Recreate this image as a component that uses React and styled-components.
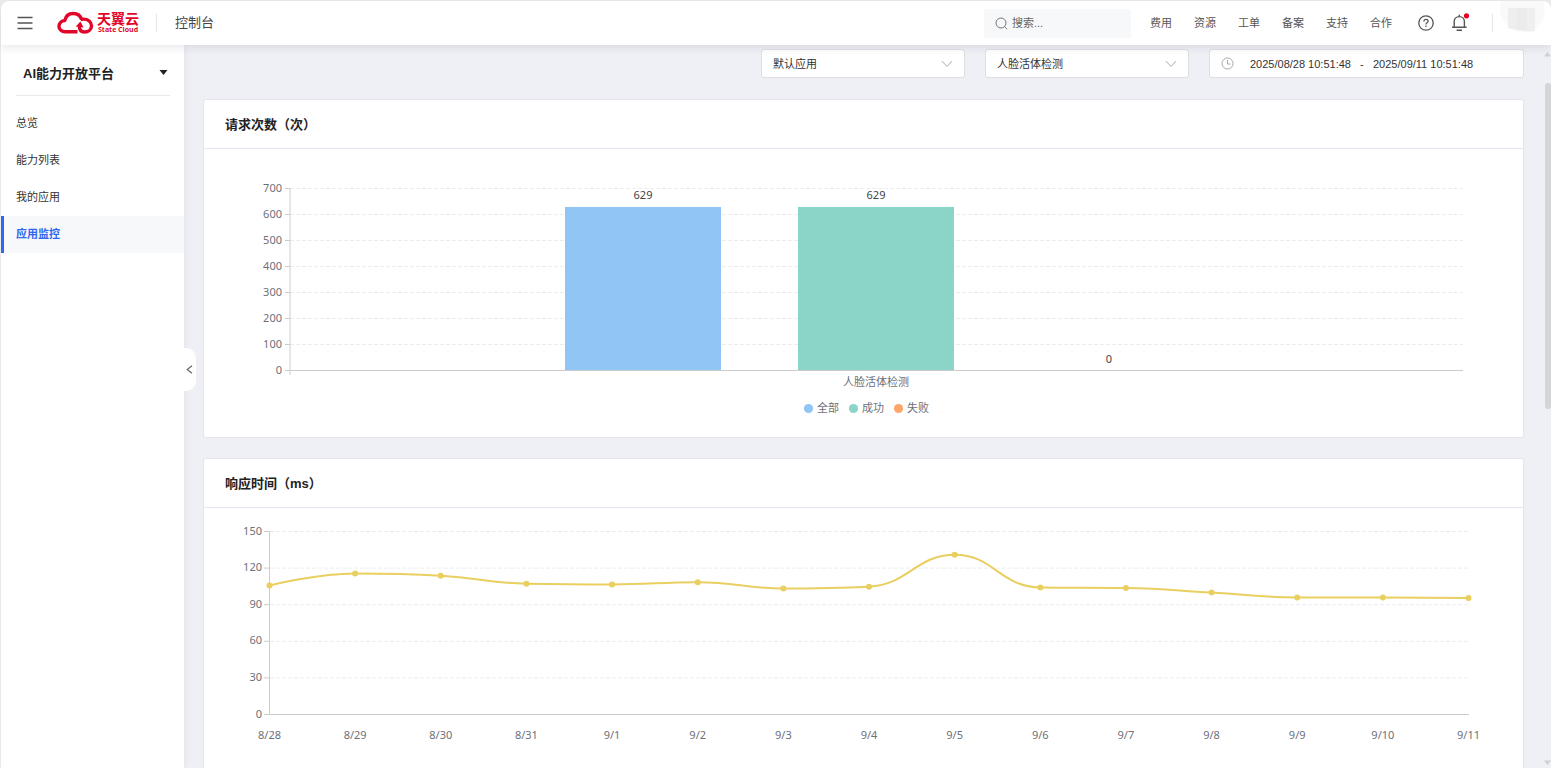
import React from "react";
import styled, { createGlobalStyle } from "styled-components";

const GlobalStyle = createGlobalStyle`
  * { box-sizing: border-box; }
  body {
    margin: 0;
    background: #eeeeef;
    color: #333;
    font-family: "Liberation Sans", "Noto Sans CJK SC", sans-serif;
    font-size: 11px;
  }
  button, input, select { font: inherit; color: inherit; }
`;

const Shell = styled.div`
  display: flex;
  flex-direction: column;
  height: 100vh;
  padding: 1px 0 0 1px;
  overflow: hidden;
`;

const Header = styled.header`
  position: relative;
  z-index: 2;
  display: flex;
  flex: none;
  align-items: center;
  height: 44px;
  padding: 0 6px 0 16px;
  background: #fff;
  border-radius: 8px 8px 0 0;
  box-shadow: 0 2px 10px rgba(40, 45, 80, 0.12);
`;

const IconButton = styled.button`
  display: flex;
  padding: 0;
  border: 0;
  background: none;
  cursor: pointer;
`;

const Brand = styled.a`
  display: flex;
  align-items: center;
  gap: 3px;
  margin-right: 17px;
  margin-left: 24px;
  color: #e1052a;
  text-decoration: none;
`;

const BrandText = styled.span`
  display: flex;
  flex-direction: column;
  width: 42px;
`;

const BrandName = styled.span`
  font-size: 14px;
  line-height: 14px;
  font-weight: 700;
`;

const BrandSub = styled.span`
  padding-left: 1px;
  font-family: "Open Sans", "Liberation Sans", sans-serif;
  font-size: 7px;
  line-height: 8px;
  font-weight: 700;
  white-space: nowrap;
`;

const Separator = styled.span`
  width: 1px;
  height: 18px;
  background: #e6e6e6;
`;

const ConsoleLink = styled.a`
  margin-left: 18px;
  color: #444;
  font-size: 13px;
  line-height: 20px;
  text-decoration: none;
`;

const Search = styled.label`
  display: flex;
  align-items: center;
  gap: 4px;
  width: 147px;
  height: 29px;
  margin-left: auto;
  padding: 0 11px;
  background: #f7f8fa;
  border-radius: 3px;
`;

const SearchInput = styled.input`
  flex: 1;
  min-width: 0;
  padding: 0;
  border: 0;
  outline: 0;
  background: none;
  &::placeholder { color: #666; opacity: 1; }
`;

const TopNav = styled.nav`
  display: flex;
  gap: 22px;
  margin: 0 26px 0 19px;
`;

const TopLink = styled.a`
  color: #555;
  line-height: 18px;
  text-decoration: none;
`;

const Actions = styled.div`
  display: flex;
  align-items: center;
  gap: 17px;
  margin-right: 21px;
`;

const Body = styled.div`
  display: flex;
  flex: 1;
  min-height: 0;
`;

const Sidebar = styled.aside`
  position: relative;
  z-index: 1;
  flex: none;
  width: 183px;
  background: #fff;
  box-shadow: 1px 0 6px rgba(40, 45, 80, 0.06);
`;

const Product = styled.button`
  display: flex;
  align-items: center;
  justify-content: space-between;
  width: 154px;
  height: 51px;
  margin: 0 0 9px 15px;
  padding: 4px 2px 0 7px;
  border: 0;
  border-bottom: 1px solid #e8e9ef;
  background: none;
  color: #222;
  font-size: 13px;
  font-weight: 700;
  cursor: pointer;
`;

const MenuLink = styled.a`
  display: flex;
  align-items: center;
  height: 37px;
  padding: 0 0 3px 12px;
  border-left: 3px solid ${(p) => (p.$active ? "#2f66f2" : "transparent")};
  background: ${(p) => (p.$active ? "#f7f8fa" : "transparent")};
  color: ${(p) => (p.$active ? "#2f66f2" : "#333")};
  font-weight: ${(p) => (p.$active ? 700 : 400)};
  text-decoration: none;
`;

const Collapse = styled.button`
  position: absolute;
  top: 303px;
  left: 100%;
  display: flex;
  align-items: center;
  width: 12px;
  height: 43px;
  padding: 0 0 0 2px;
  border: 0;
  border-radius: 0 10px 10px 0;
  background: #fff;
  cursor: pointer;
`;

const Main = styled.main`
  flex: 1;
  min-width: 0;
  padding: 4px 20px 0 19px;
  overflow: hidden;
  background: #eff0f5;
`;

const Filters = styled.div`
  display: flex;
  justify-content: flex-end;
  gap: 20px;
  margin-bottom: 21px;
`;

const Field = styled.div`
  display: flex;
  align-items: center;
  width: ${(p) => p.$width}px;
  height: 29px;
  padding: 0 11px;
  border: 1px solid #dddfe3;
  border-radius: 3px;
  background: #fff;
`;

const Select = styled.select`
  flex: 1;
  height: 27px;
  padding: 0;
  border: 0;
  outline: 0;
  appearance: none;
  background: none;
`;

const DateInput = styled.input`
  width: 104px;
  padding: 0;
  border: 0;
  outline: 0;
  background: none;
`;

const DateDash = styled.span`
  width: 19px;
  padding-left: 6px;
`;

const ClockWrap = styled.span`
  display: flex;
  width: 29px;
`;

const Card = styled.section`
  margin-bottom: 20px;
  border: 1px solid #e4e5ee;
  border-radius: 3px;
  background: #fff;
`;

const CardTitle = styled.h2`
  display: flex;
  align-items: center;
  height: 49px;
  margin: 0;
  padding: 0 0 2px 21px;
  border-bottom: 1px solid #e4e5ee;
  color: #222;
  font-size: 13px;
  font-weight: 700;
`;

const Chart = styled.svg`
  display: block;
  width: 100%;
  height: auto;
  font-family: "Noto Sans", "Noto Sans CJK SC", sans-serif;
  font-size: 11px;
  fill: #6e7079;
`;

const ScrollTrack = styled.div`
  display: flex;
  flex: none;
  flex-direction: column;
  align-items: center;
  justify-content: space-between;
  width: 7px;
  padding: 7px 0 3px;
  background: #eff0f5;
`;

const ScrollThumb = styled.div`
  width: 6px;
  height: 326px;
  margin: 26px 0 auto;
  border-radius: 3px;
  background: #d5d5d8;
`;

const Chevron = () => (
  <svg width="12" height="8" viewBox="0 0 12 8" fill="none" stroke="#a5a8ad" aria-hidden="true">
    <path d="M1 1.2 6 6.4 11 1.2" />
  </svg>
);

const CloudLogo = () => (
  <svg width="37" height="24" viewBox="0 0 37 24" fill="none" stroke="#e1052a" strokeWidth="3.4" strokeLinejoin="round" aria-hidden="true">
    <path d="M20.500 20.800H8.300C4.700 20.800 2 18.600 2 15.400s2.400-5.700 5.800-5.900C8.700 5.200 12 2.500 16.200 2.500c4.200 0 7.300 2.300 8.400 6.100" />
    <path d="M23.500 8.700c.9-.4 1.900-.6 3-.6 4.600 0 8 2.800 8 6.600 0 3.700-3.100 6.300-7 6.300-3.300 0-5.200-2.200-5.200-6.200" />
    <path d="M18.800 15.400 23.400 10.400 26.600 16.600Z" fill="#e1052a" stroke="none" />
  </svg>
);

const Y1_TOP = 39.5;
const Y1_BASE = 221.5;
const BARS = [
  { name: "全部", value: 629, color: "#91c5f6", x: 361 },
  { name: "成功", value: 629, color: "#8bd4c8", x: 594 },
  { name: "失败", value: 0, color: "#fca66a", x: 827 },
];

const RequestChart = () => {
  const y = (v) => Y1_BASE - (v / 700) * (Y1_BASE - Y1_TOP);
  return (
    <Chart viewBox="0 0 1319 288" role="img" aria-label="请求次数">
      {[0, 100, 200, 300, 400, 500, 600, 700].map((v) => (
        <g key={v}>
          {v > 0 && <path d={`M86 ${y(v)}H1259`} stroke="#ededf0" strokeDasharray="4 2" />}
          <path d={`M81 ${y(v)}h5`} stroke="#ccc" />
          <text x="78" y={y(v) + 3} textAnchor="end">{v}</text>
        </g>
      ))}
      <path d="M86 39V226" stroke="#ccc" />
      {BARS.map((b, i) => (
        <g key={b.name}>
          <rect x={b.x} y={y(b.value)} width="156" height={Y1_BASE - y(b.value)} fill={b.color} />
          <text x={b.x + 78} y={y(b.value) - 8} textAnchor="middle" fill="#444">{b.value}</text>
          <circle cx={604.5 + i * 45} cy="259.500" r="4.600" fill={b.color} />
          <text x={613 + i * 45} y="263">{b.name}</text>
        </g>
      ))}
      <path d="M86 221.500H1259" stroke="#ccc" />
      <text x="672" y="237" textAnchor="middle">人脸活体检测</text>
    </Chart>
  );
};

const SERIES = [
  ["8/28", 105.7], ["8/29", 115.6], ["8/30", 113.8], ["8/31", 107.2], ["9/1", 106.6],
  ["9/2", 108.5], ["9/3", 103.3], ["9/4", 104.8], ["9/5", 131], ["9/6", 104.1],
  ["9/7", 103.7], ["9/8", 100], ["9/9", 95.9], ["9/10", 95.9], ["9/11", 95.4],
];

const SMOOTH = 0.45;

const clamp = (v, a, b) => Math.min(Math.max(v, Math.min(a, b)), Math.max(a, b));

// Smooth path whose control points never leave the range of the neighbouring points.
const smoothPath = (pts) => {
  let d = `M${pts[0].join(" ")}`;
  let out = pts[0];
  for (let i = 1; i < pts.length; i++) {
    const prev = pts[i - 1];
    const cur = pts[i];
    const next = pts[i + 1];
    let inn = cur;
    let nextOut = cur;
    if (next) {
      const lp = Math.hypot(cur[0] - prev[0], cur[1] - prev[1]);
      const ln = Math.hypot(next[0] - cur[0], next[1] - cur[1]);
      const ratio = ln / (ln + lp);
      nextOut = cur.map((c, k) => clamp(c + (next[k] - prev[k]) * SMOOTH * ratio, next[k], c));
      inn = cur.map((c, k) => clamp(c - ((nextOut[k] - c) * lp) / ln, prev[k], c));
      nextOut = cur.map((c, k) => c + ((c - inn[k]) * ln) / lp);
    }
    d += `C${out.join(" ")} ${inn.join(" ")} ${cur.join(" ")}`;
    out = nextOut;
  }
  return d;
};

const LatencyChart = () => {
  const y = (v) => 206.5 - (v / 150) * 183;
  const points = SERIES.map(([, v], i) => [65.5 + (i * 1199) / 14, y(v)]);
  return (
    <Chart viewBox="0 0 1319 290" role="img" aria-label="响应时间">
      {[0, 30, 60, 90, 120, 150].map((v) => (
        <g key={v}>
          {v > 0 && <path d={`M66 ${y(v)}H1265`} stroke="#ededf0" strokeDasharray="4 2" />}
          <path d={`M60 ${y(v)}h6`} stroke="#ccc" />
          <text x="58" y={y(v) + 3} textAnchor="end">{v}</text>
        </g>
      ))}
      <path d="M65.500 23V206.500H1265" fill="none" stroke="#ccc" />
      <path d={smoothPath(points)} fill="none" stroke="#e9cf60" strokeWidth="2" />
      {SERIES.map(([label], i) => (
        <g key={label}>
          <circle cx={points[i][0]} cy={points[i][1]} r="3" fill="#e9cf60" />
          <text x={points[i][0]} y="231" textAnchor="middle">{label}</text>
        </g>
      ))}
    </Chart>
  );
};

export default function App() {
  return (
    <Shell>
      <GlobalStyle />
      <Header>
        <IconButton aria-label="菜单">
          <svg width="16" height="14" viewBox="0 0 16 14" stroke="#555" strokeWidth="1.500">
            <path d="M.5 1.500h15M.5 7h15M.5 12.500h15" />
          </svg>
        </IconButton>
        <Brand href="#" aria-label="天翼云">
          <CloudLogo />
          <BrandText>
            <BrandName>天翼云</BrandName>
            <BrandSub>State Cloud</BrandSub>
          </BrandText>
        </Brand>
        <Separator />
        <ConsoleLink href="#">控制台</ConsoleLink>
        <Search>
          <svg width="13" height="13" viewBox="0 0 13 13" fill="none" stroke="#777" aria-hidden="true">
            <circle cx="6" cy="6" r="5" />
            <path d="m9.600 9.600 2.400 2.600" />
          </svg>
          <SearchInput aria-label="搜索" placeholder="搜索..." />
        </Search>
        <TopNav>
          {["费用", "资源", "工单", "备案", "支持", "合作"].map((t) => (
            <TopLink key={t} href="#">{t}</TopLink>
          ))}
        </TopNav>
        <Actions>
          <IconButton aria-label="帮助">
            <svg width="16" height="16" viewBox="0 0 16 16" fill="none" stroke="#555" strokeWidth="1.300">
              <circle cx="8" cy="8" r="7.200" />
              <path d="M5.900 6.500c0-1.300.9-2.100 2.100-2.100s2.100.8 2.100 1.900c0 1.500-2.100 1.500-2.100 3.100" />
              <path d="M8 10.500v1.400" />
            </svg>
          </IconButton>
          <IconButton aria-label="通知">
            <svg width="20" height="20" viewBox="0 0 20 20" fill="none" stroke="#555" strokeWidth="1.400">
              <path d="M1 14.300h14.600M3.200 14.300V8.600c0-2.900 2.100-5 5.100-5s5.100 2.100 5.100 5v5.700M8.300 1.800v1.800M5.600 17.200h5.400" />
              <circle cx="15.500" cy="2.800" r="2.600" fill="#e60023" stroke="none" />
            </svg>
          </IconButton>
        </Actions>
        <Separator />
        <AvatarButton aria-label="账号">
          <svg width="46" height="44" viewBox="0 0 46 44">
            <path d="M2 0h42c3 8 2 17-3 23-5 7-13 9-20 8C8 29-2 14 2 0Z" fill="#f9f9f9" />
            <path d="M9 7h9v22l-9-2Z" fill="#eeeeee" />
            <path d="M18 7h10v23l-10-1Z" fill="#ebebeb" />
            <path d="M28 7h8v23l-8 1Z" fill="#efefef" />
          </svg>
        </AvatarButton>
      </Header>
      <Body>
        <Sidebar>
          <Product>
            AI能力开放平台
            <svg width="9" height="5" viewBox="0 0 9 5" aria-hidden="true">
              <path d="M.5 0h8l-4 5Z" fill="#222" />
            </svg>
          </Product>
          <nav>
            <MenuLink href="#">总览</MenuLink>
            <MenuLink href="#">能力列表</MenuLink>
            <MenuLink href="#">我的应用</MenuLink>
            <MenuLink href="#" $active>应用监控</MenuLink>
          </nav>
          <Collapse aria-label="收起">
            <svg width="7" height="9" viewBox="0 0 7 9" fill="none" stroke="#666" strokeWidth="1.200">
              <path d="M6 .8 1.200 4.500 6 8.200" />
            </svg>
          </Collapse>
        </Sidebar>
        <Main>
          <Filters>
            <Field $width={204}>
              <Select aria-label="应用"><option>默认应用</option></Select>
              <Chevron />
            </Field>
            <Field $width={204}>
              <Select aria-label="能力"><option>人脸活体检测</option></Select>
              <Chevron />
            </Field>
            <Field $width={315}>
              <ClockWrap>
                <svg width="13" height="13" viewBox="0 0 13 13" fill="none" stroke="#a5a8ad" aria-hidden="true">
                  <circle cx="6.500" cy="6.500" r="5.500" />
                  <path d="M6.500 3v4H9.500" />
                </svg>
              </ClockWrap>
              <DateInput aria-label="开始时间" defaultValue="2025/08/28 10:51:48" />
              <DateDash>-</DateDash>
              <DateInput aria-label="结束时间" defaultValue="2025/09/11 10:51:48" />
            </Field>
          </Filters>
          <Card>
            <CardTitle>请求次数（次）</CardTitle>
            <RequestChart />
          </Card>
          <Card>
            <CardTitle>响应时间（ms）</CardTitle>
            <LatencyChart />
          </Card>
        </Main>
        <ScrollTrack aria-hidden="true">
          <svg width="7" height="5" viewBox="0 0 7 5"><path d="M0 4.500h7L3.500 0Z" fill="#d0d0d3" /></svg>
          <ScrollThumb />
          <svg width="7" height="5" viewBox="0 0 7 5"><path d="M0 .5h7L3.500 5Z" fill="#d0d0d3" /></svg>
        </ScrollTrack>
      </Body>
    </Shell>
  );
}

const AvatarButton = styled(IconButton)`
  margin-left: 6px;
`;
